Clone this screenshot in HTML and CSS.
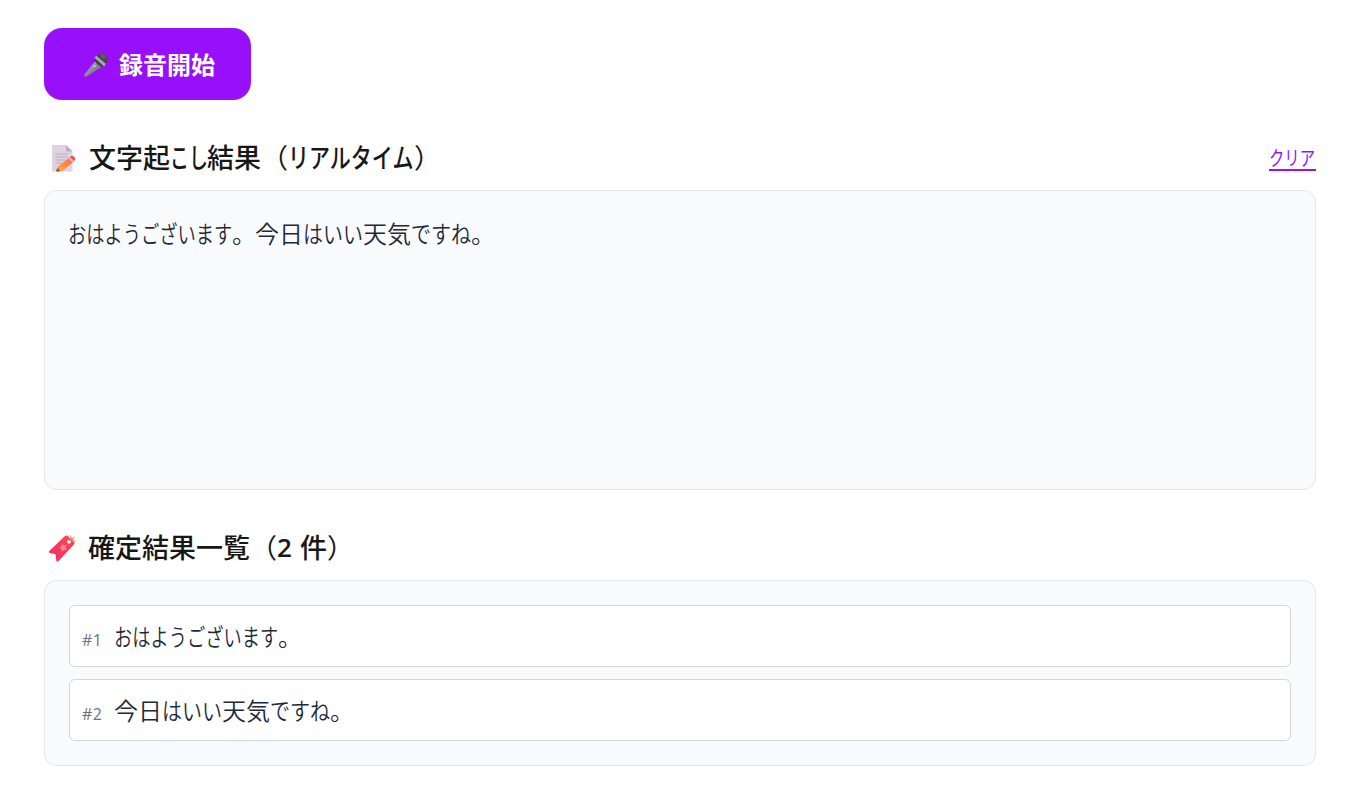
FILE: index.html
```html
<!DOCTYPE html>
<html lang="ja">
<head>
<meta charset="utf-8">
<title>文字起こし</title>
<link rel="stylesheet" href="styles.css">
</head>
<body>
<main class="page">
  <button class="record" type="button">
    <svg class="mic" viewBox="0 0 26 26" aria-hidden="true">
      <defs><linearGradient id="handle" x1="0" y1="0" x2="1" y2="1"><stop offset=".3" stop-color="#a7a2ad"/><stop offset=".7" stop-color="#77727e"/></linearGradient></defs>
      <path d="M14 7L20 14L3.500 24.500Q1 25 1.300 22.500Z" fill="url(#handle)"/>
      <circle cx="18.500" cy="7.500" r="6.300" fill="#4b4058"/>
      <path d="M17 2Q22 1 24 6L19 7Z" fill="#65566b"/>
      <path d="M13 3.500L23 12L21 14.500L11.500 6Z" fill="#aaa5b0"/>
      <path d="M11.500 6L21 14.500L18.500 15L11.500 9Z" fill="#463b51"/>
      <circle cx="11.500" cy="14" r="1.100" fill="#ddd8df"/>
    </svg>
    <span>録音開始</span>
  </button>

  <section class="section">
    <header class="heading">
      <h2 class="title">
        <svg class="icon" viewBox="0 0 28 28" aria-hidden="true">
          <defs><linearGradient id="pencil" x1="0" y1="1" x2="1" y2="0"><stop offset="0" stop-color="#ffab4f"/><stop offset="1" stop-color="#f96b3c"/></linearGradient></defs>
          <path d="M4 1H18L24.500 7.500V27.500H4Z" fill="#ddd3e4"/>
          <path d="M18 1V7.500H24.500Z" fill="#b9adc3"/>
          <path d="M7.500 10H20M7.500 13H20M7.500 16H17M7.500 19H14" stroke="#b5acbd" stroke-width="1.200"/>
          <path d="M8 27.500L9.800 22.500L22 13L26 17.500L14.500 27Z" fill="url(#pencil)"/>
          <path d="M8 27.500L9.300 24L12.500 27.200Z" fill="#805168"/>
          <path d="M20.500 14.200L22 13L26 17.300L24.500 18.500Z" fill="#d8c2cf"/>
          <path d="M22 13Q23.500 11 25.500 12.200L27 13.800Q27.800 15.500 26 17.300Z" fill="#f54c56"/>
        </svg>
        <span class="words">文字起<span class="kana kana-koshi">こし</span>結果<span class="paren">（</span><span class="kana kana-realtime">リアルタイム</span><span class="paren">）</span></span>
      </h2>
      <button class="clear" type="button"><span class="kana kana-clear">クリア</span></button>
    </header>
    <div class="panel transcript"><span class="kana kana-greeting">おはようございます</span><span class="stop">。</span>今日<span class="kana kana-haii">はいい</span>天気<span class="kana kana-desune">ですね</span>。</div>
  </section>

  <section class="section">
    <header class="heading">
      <h2 class="title title-list">
        <svg class="icon" viewBox="0 0 28 28" aria-hidden="true">
          <defs><linearGradient id="tag" x1="0" y1="1" x2="1" y2="0"><stop offset="0" stop-color="#ee2d67"/><stop offset="1" stop-color="#ff4950"/></linearGradient></defs>
          <path d="M1.300 17L16.500 2.500Q18 1 19.500 1.800L25.800 7.500Q27.300 9.200 25.800 10.800L10.500 27Q9 28.300 8.300 26.700L7.500 20.200L2 19Q.300 18.300 1.300 17Z" fill="url(#tag)"/>
          <path d="M13.800 9.500L15.700 11.200L18.700 10.800L17.600 13.600L18.800 16.200L16 15.800L13.600 17.800L13.300 14.900L11 13.300L13.700 12.200Z" fill="#ff809b"/>
          <circle cx="21" cy="7.700" r="1.900" fill="#fff"/>
          <path d="M21 7.200Q22.500 4.500 24 5Q26 6 27.300 7.300M23.500 5L22.500 1.500M23.500 5L26.700 3" fill="none" stroke="#d18c48" stroke-width="1"/>
        </svg>
        <span class="words">確定結果一覧<span class="paren">（</span><span class="count">2</span>件<span class="paren">）</span></span>
      </h2>
    </header>
    <div class="panel results">
      <div class="result"><span class="number">#1</span><span class="sentence"><span class="kana kana-greeting">おはようございます</span>。</span></div>
      <div class="result"><span class="number">#2</span><span class="sentence">今日<span class="kana kana-haii">はいい</span>天気<span class="kana kana-desune">ですね</span>。</span></div>
    </div>
  </section>
</main>
</body>
</html>
```
FILE: styles.css
```css
* { box-sizing: border-box; }

body {
  margin: 0;
  background: #fff;
  color: #171717;
  font-family: "Noto Sans CJK JP", sans-serif;
}

.page { padding: 28px 43px 27px 44px; }

button { font: inherit; border: 0; margin: 0; }

.record {
  display: flex;
  align-items: center;
  gap: 10px;
  width: 207px;
  height: 72px;
  padding: 0 0 0 39px;
  border-radius: 18px;
  background: #9810fa;
  color: #fff;
  font-size: 24px;
  line-height: 36px;
  font-weight: 700;
  white-space: nowrap;
}

.mic { width: 26px; height: 26px; flex: none; margin-top: 2px; }

.section { margin-top: 36px; }

.heading {
  display: flex;
  justify-content: space-between;
  align-items: center;
  height: 42px;
  margin-bottom: 12px;
}

.title {
  display: flex;
  align-items: center;
  gap: 12px;
  margin: 0;
  padding-left: 4px;
  font-size: 27px;
  line-height: 40px;
  font-weight: 500;
}

.title-list { gap: 11px; }
.words { display: flex; white-space: nowrap; margin-top: -1px; }
.icon { width: 28px; height: 28px; flex: none; margin-right: 1px; margin-top: 1px; }
.paren { font-weight: 400; }
.count { width: 23px; font-family: "Open Sans", sans-serif; font-size: 26px; font-weight: 600; }

/* Proportional-width kana runs */
.kana {
  display: inline-block;
  transform-origin: left center;
  white-space: nowrap;
}

.kana-koshi { width: 37px; transform: scaleX(.7); }
.kana-realtime { width: 126px; transform: scaleX(.778); }
.kana-clear { width: 46px; transform: scaleX(.767); }
.kana-greeting { width: 164px; transform: scaleX(.76); }
.kana-haii { width: 60px; transform: scaleX(.833); }
.kana-desune { width: 60px; transform: scaleX(.835); }
.stop { width: 23px; }

.clear {
  height: 26px;
  margin: 2px 0 0 0;
  padding: 0;
  border-bottom: 2px solid #9810fa;
  background: none;
  color: #9810fa;
  font-size: 20px;
  line-height: 25px;
  font-weight: 400;
}

.kana-clear { width: 47px; }

.panel {
  border: 1px solid #e5e7eb;
  border-radius: 12px;
  background: #f9fafb;
  padding: 24px;
  color: #1e2939;
}

.transcript {
  display: flex;
  height: 300px;
  padding: 22px 23px;
  font-size: 24px;
  line-height: 39px;
  font-weight: 350;
}

.results {
  display: flex;
  flex-direction: column;
  gap: 12px;
  height: 186px;
}

.result {
  display: flex;
  align-items: baseline;
  gap: 12px;
  height: 62px;
  padding: 10px 12px;
  border: 1px solid #d1d5dc;
  border-radius: 6px;
  background: #fff;
}

.number {
  width: 20px;
  color: #6a7282;
  font-family: "Open Sans", sans-serif;
  font-size: 16px;
  font-weight: 400;
  letter-spacing: .5px;
}

.sentence {
  display: flex;
  font-size: 24px;
  line-height: 39px;
  font-weight: 350;
}
```
